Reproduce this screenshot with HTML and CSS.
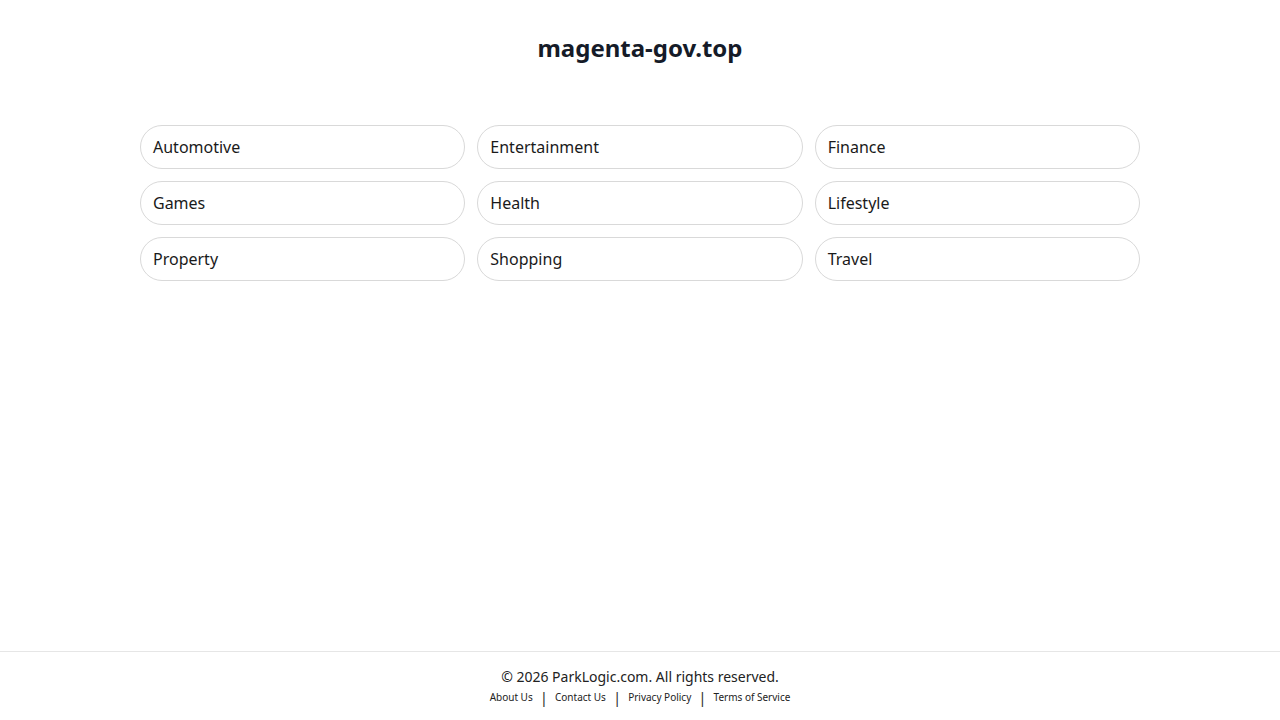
FILE: index.html
```html
<!DOCTYPE html>
<html lang="en">
<head>
<meta charset="utf-8">
<title>magenta-gov.top</title>
<link rel="stylesheet" href="styles.css">
</head>
<body>
<div class="page">
  <header class="header">
    <h1 class="title">magenta-gov.top</h1>
  </header>
  <main class="main">
    <div class="grid">
      <a class="item" href="#">Automotive</a>
      <a class="item" href="#">Entertainment</a>
      <a class="item" href="#">Finance</a>
      <a class="item" href="#">Games</a>
      <a class="item" href="#">Health</a>
      <a class="item" href="#">Lifestyle</a>
      <a class="item" href="#">Property</a>
      <a class="item" href="#">Shopping</a>
      <a class="item" href="#">Travel</a>
    </div>
  </main>
  <footer class="footer">
    <div class="copy">© 2026 ParkLogic.com. All rights reserved.</div>
    <div class="links">
      <a href="#">About Us</a><span class="sep">|</span><a href="#">Contact Us</a><span class="sep">|</span><a href="#">Privacy Policy</a><span class="sep">|</span><a href="#">Terms of Service</a>
    </div>
  </footer>
</div>
</body>
</html>
```
FILE: styles.css
```css
html, body {
  margin: 0;
  padding: 0;
  background: #ffffff;
}
body {
  font-family: "Noto Sans", "Open Sans", sans-serif;
  color: #111111;
}
.page {
  min-height: 100vh;
  display: flex;
  flex-direction: column;
}
.header {
  padding-top: 32px;
  text-align: center;
}
.title {
  margin: 0;
  font-size: 24px;
  line-height: 32px;
  font-weight: 700;
  color: #151b28;
}
.main {
  flex: 1;
  padding-top: 61px;
}
.grid {
  width: 1000px;
  margin: 0 auto;
  display: grid;
  grid-template-columns: repeat(3, 1fr);
  column-gap: 12px;
  row-gap: 12px;
}
.item {
  display: flex;
  align-items: center;
  height: 44px;
  box-sizing: border-box;
  padding: 0 12px;
  border: 1px solid #d9d9d9;
  border-radius: 22px;
  font-size: 16px;
  color: #1a1a1a;
  text-decoration: none;
}
.footer {
  border-top: 1px solid #e6e6e6;
  padding: 15px 0 13px;
  text-align: center;
}
.copy {
  font-size: 14px;
  line-height: 20px;
  color: #222222;
}
.links {
  display: flex;
  justify-content: center;
  align-items: center;
  height: 20px;
  font-size: 10px;
}
.links a {
  color: #222222;
  text-decoration: none;
}
.sep {
  font-size: 15px;
  margin: 0 7px;
  color: #333333;
}
```
